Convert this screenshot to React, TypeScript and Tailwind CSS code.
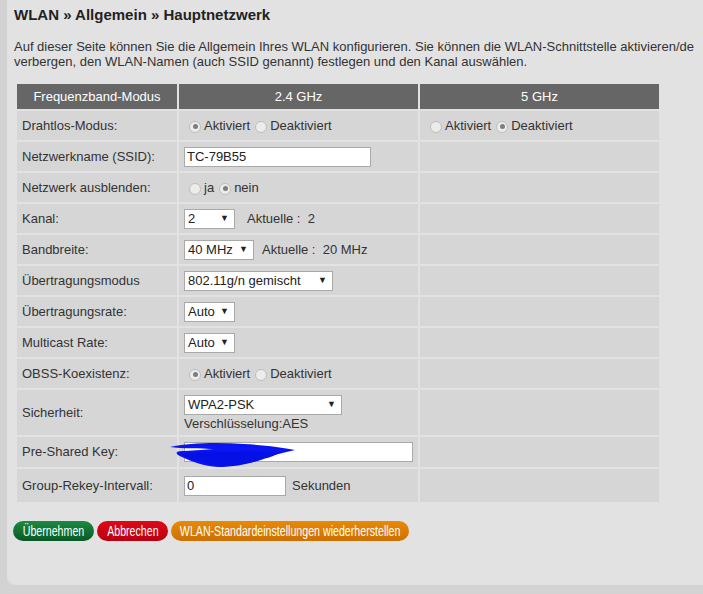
import React from "react";

const font = { fontFamily: '"Liberation Sans", Arial, sans-serif' };

function Radio({ checked }: { checked?: boolean }) {
  return (
    <span className="inline-flex items-center justify-center w-[12px] h-[12px] rounded-full border border-[#bdbdbd] bg-[#ececec] ml-[5px] mr-[3px] translate-y-[1px]">
      {checked && <span className="w-[5px] h-[5px] rounded-full bg-[#7d7d7d]" />}
    </span>
  );
}

function RadioPair({ first, a, b }: { first: boolean; a: string; b: string }) {
  return (
    <div className="flex items-center">
      <Radio checked={first} />
      <span>{a}</span>
      <Radio checked={!first} />
      <span>{b}</span>
    </div>
  );
}

function Select({ value, w }: { value: string; w: string }) {
  return (
    <div
      className={`flex items-center justify-between h-[20px] bg-white border border-[#a9a9a9] pl-[3px] pr-[5px] text-[#222] ${w}`}
    >
      <span>{value}</span>
      <span className="text-[9px] leading-none">▼</span>
    </div>
  );
}

function TextBox({ value, w }: { value: string; w: string }) {
  return (
    <div className={`flex items-center h-[20px] bg-white border border-[#a9a9a9] px-[2px] text-[#222] ${w}`}>
      {value}
    </div>
  );
}

function Row({ label, children, tall }: { label: string; children?: React.ReactNode; tall?: boolean }) {
  return (
    <tr className={tall ? "h-[45px]" : "h-[29px]"}>
      <td className="bg-[#d6d6d6] px-[5px] align-middle">{label}</td>
      <td className="bg-[#d6d6d6] px-[5px] align-middle">{children}</td>
      <td className="bg-[#d6d6d6] px-[5px] align-middle"></td>
    </tr>
  );
}

function PillButton({ label, w, colors }: { label: string; w: string; colors: string }) {
  return (
    <button className={`h-[20px] rounded-full flex items-center justify-center overflow-visible ${w} ${colors}`}>
      <span className="inline-block whitespace-nowrap scale-x-[0.76] leading-none">{label}</span>
    </button>
  );
}

export default function App() {
  return (
    <div className="w-[703px] h-[594px] bg-[#d5d5d5] flex flex-col overflow-hidden text-[13px] text-[#333]" style={font}>
      <div className="flex h-[585px] shrink-0">
        <div className="w-[7px] shrink-0 bg-[#d2d2d2]" />
        <div className="flex-1 min-w-0 overflow-hidden bg-[#e2e2e2] rounded-bl-[9px] pl-[7px] pt-[5px]">
          <h1 className="text-[15px] font-bold text-[#222] leading-[20px]">WLAN » Allgemein » Hauptnetzwerk</h1>
          <p className="mt-[14px] leading-[15px] whitespace-nowrap">
            Auf dieser Seite können Sie die Allgemein Ihres WLAN konfigurieren. Sie können die WLAN-Schnittstelle aktivieren/de
            <br />
            verbergen, den WLAN-Namen (auch SSID genannt) festlegen und den Kanal auswählen.
          </p>
          <table className="mt-[13px] ml-[1px] border-separate border-spacing-[2px] w-[646px]">
            <colgroup>
              <col className="w-[160px]" />
              <col className="w-[239px]" />
              <col className="w-[239px]" />
            </colgroup>
            <thead>
              <tr className="h-[25px]">
                <th className="bg-[#666] text-white font-normal text-center">Frequenzband-Modus</th>
                <th className="bg-[#666] text-white font-normal text-center">2.4 GHz</th>
                <th className="bg-[#666] text-white font-normal text-center">5 GHz</th>
              </tr>
            </thead>
            <tbody>
              <tr className="h-[29px]">
                <td className="bg-[#d6d6d6] px-[5px]">Drahtlos-Modus:</td>
                <td className="bg-[#d6d6d6] px-[5px]">
                  <RadioPair first a="Aktiviert" b="Deaktiviert" />
                </td>
                <td className="bg-[#d6d6d6] px-[5px]">
                  <RadioPair first={false} a="Aktiviert" b="Deaktiviert" />
                </td>
              </tr>
              <Row label="Netzwerkname (SSID):">
                <TextBox value="TC-79B55" w="w-[187px]" />
              </Row>
              <Row label="Netzwerk ausblenden:">
                <RadioPair first={false} a="ja" b="nein" />
              </Row>
              <Row label="Kanal:">
                <div className="flex items-center">
                  <Select value="2" w="w-[51px]" />
                  <span className="ml-[12px] whitespace-pre">Aktuelle :  2</span>
                </div>
              </Row>
              <Row label="Bandbreite:">
                <div className="flex items-center">
                  <Select value="40 MHz" w="w-[70px]" />
                  <span className="ml-[8px] whitespace-pre">Aktuelle :  20 MHz</span>
                </div>
              </Row>
              <Row label="Übertragungsmodus">
                <Select value="802.11g/n gemischt" w="w-[149px]" />
              </Row>
              <Row label="Übertragungsrate:">
                <Select value="Auto" w="w-[51px]" />
              </Row>
              <Row label="Multicast Rate:">
                <Select value="Auto" w="w-[51px]" />
              </Row>
              <Row label="OBSS-Koexistenz:">
                <RadioPair first a="Aktiviert" b="Deaktiviert" />
              </Row>
              <Row label="Sicherheit:" tall>
                <div className="flex flex-col">
                  <Select value="WPA2-PSK" w="w-[158px] h-[19px]" />
                  <span className="leading-[15px] mt-[1px]">Verschlüsselung:AES</span>
                </div>
              </Row>
              <tr className="h-[30px]">
                <td className="bg-[#d6d6d6] px-[5px]">Pre-Shared Key:</td>
                <td className="bg-[#d6d6d6] px-[5px]">
                  <div className="relative">
                    <TextBox value="" w="w-[229px]" />
                    {/* hand-drawn redaction scribble over the key */}
                    <svg className="absolute left-[-14px] top-[0px]" width="126" height="26" viewBox="0 0 126 26">
                      <path
                        d="M0 5 C18 1 46 0 74 2 C92 3 112 5 125 8 C114 11 102 13 94 16 C84 21 66 25 48 25 C34 24 22 20 12 15 C5 12 4 9 14 9 C26 8 36 8 44 7 C30 6 12 7 0 5 Z"
                        fill="#0a14f0"
                      />
                      <path
                        d="M10 12 C40 9 76 9 112 10 C100 16 80 22 58 24 C40 24 24 19 10 12 Z"
                        fill="#0410e6"
                      />
                      <path d="M24 4 C50 2 74 4 98 7 C72 10 46 9 24 4 Z" fill="#0b16f2" />
                    </svg>
                  </div>
                </td>
                <td className="bg-[#d6d6d6]"></td>
              </tr>
              <tr className="h-[33px]">
                <td className="bg-[#d6d6d6] px-[5px]">Group-Rekey-Intervall:</td>
                <td className="bg-[#d6d6d6] px-[5px]">
                  <div className="flex items-center">
                    <TextBox value="0" w="w-[102px]" />
                    <span className="ml-[6px]">Sekunden</span>
                  </div>
                </td>
                <td className="bg-[#d6d6d6]"></td>
              </tr>
            </tbody>
          </table>
          <div className="flex gap-[3px] mt-[17px] ml-[-1px] text-white text-[14px]">
            <PillButton label="Übernehmen" w="w-[81px]" colors="bg-gradient-to-b from-[#1c8a42] to-[#075a24]" />
            <PillButton label="Abbrechen" w="w-[71px]" colors="bg-gradient-to-b from-[#e00818] to-[#b80010]" />
            <PillButton
              label="WLAN-Standardeinstellungen wiederherstellen"
              w="w-[238px]"
              colors="bg-gradient-to-b from-[#e88a06] to-[#cc7000]"
            />
          </div>
        </div>
      </div>
      <div className="h-[9px] bg-[#d3d3d3]" />
    </div>
  );
}
